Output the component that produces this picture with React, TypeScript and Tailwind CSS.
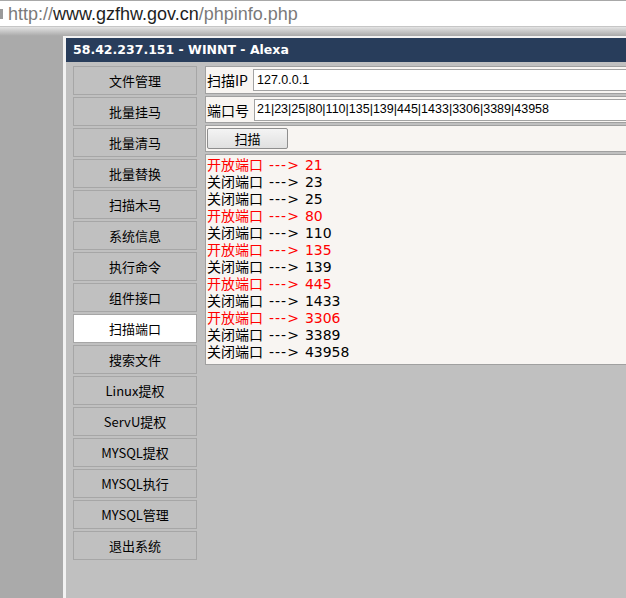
import React from 'react';

const menu = [
    '文件管理',
    '批量挂马',
    '批量清马',
    '批量替换',
    '扫描木马',
    '系统信息',
    '执行命令',
    '组件接口',
    '扫描端口',
    '搜索文件',
    'Linux提权',
    'ServU提权',
    'MYSQL提权',
    'MYSQL执行',
    'MYSQL管理',
    '退出系统',
];

const results: [boolean, string][] = [
    [true, '21'],
    [false, '23'],
    [false, '25'],
    [true, '80'],
    [false, '110'],
    [true, '135'],
    [false, '139'],
    [true, '445'],
    [false, '1433'],
    [true, '3306'],
    [false, '3389'],
    [false, '43958'],
];

export default function App() {
    return (
        <div className="h-[598px] w-[626px] overflow-hidden flex flex-col bg-[#aaaaaa]">
            {/* address bar */}
            <div className="h-[27px] shrink-0 bg-white border-t border-b border-t-[#a8a8a8] border-b-[#c6c6c6] flex items-center font-['Liberation_Sans',Arial,sans-serif] text-[18px] leading-none">
                <div className="w-[3px] h-[10px] bg-[#9a9a9a] mr-[5px]" />
                <span className="text-[#7a7a7a]">http://</span>
                <span className="text-[#1e1e1e]">www.gzfhw.gov.cn</span>
                <span className="text-[#7a7a7a]">/phpinfo.php</span>
            </div>
            <div className="h-[9px] shrink-0 bg-gradient-to-b from-[#e4e4e4] to-[#a9a9a9]" />

            <div className="flex-1 flex min-h-0">
                <div className="w-[63px] shrink-0" />
                <div className="flex-1 border-l-[3px] border-t-2 border-[#f2f2f2] bg-[#c0c0c0] overflow-hidden flex flex-col">
                    <div className="h-[24px] shrink-0 bg-[#283d5b] text-white font-bold text-[12.5px] pl-[7px] flex items-center font-['DejaVu_Sans',Verdana,sans-serif] whitespace-nowrap">
                        58.42.237.151 - WINNT - Alexa
                    </div>

                    <div className="flex pt-[4px] pl-[7px]">
                        <div className="w-[124px] shrink-0 flex flex-col gap-[2px]">
                            {menu.map((m) => (
                                <div
                                    key={m}
                                    className={
                                        'h-[29px] border border-[#a6a6a6] flex items-center justify-center text-[13px] text-black font-["Noto_Sans_CJK_SC",sans-serif] ' +
                                        (m === '扫描端口' ? 'bg-white' : 'bg-[#c0c0c0]')
                                    }
                                >
                                    {m}
                                </div>
                            ))}
                        </div>

                        <div className="ml-[8px] w-[600px] shrink-0 flex flex-col gap-[2px] text-[14px] font-['Noto_Sans_CJK_SC',sans-serif]">
                            <div className="h-[28px] border border-[#a0a0a0] bg-[#f8f5f2] flex items-center pl-[1px]">
                                <span className="w-[46px] leading-none">扫描IP</span>
                                <div className="flex-1 h-[22px] border border-[#a3a3a3] bg-white flex items-center pl-[3px] text-[12.5px] font-['Liberation_Sans',Arial,sans-serif]">
                                    127.0.0.1
                                </div>
                            </div>
                            <div className="h-[27px] border border-[#a0a0a0] bg-[#f8f5f2] flex items-center pl-[1px]">
                                <span className="w-[47px] leading-none">端口号</span>
                                <div className="flex-1 h-[22px] border border-[#a3a3a3] bg-white flex items-center pl-[2px] text-[12.5px] font-['Liberation_Sans',Arial,sans-serif] whitespace-nowrap">
                                    21|23|25|80|110|135|139|445|1433|3306|3389|43958
                                </div>
                            </div>
                            <div className="h-[27px] border border-[#a0a0a0] bg-[#f8f5f2] flex items-center pl-[1px]">
                                <button className="w-[81px] h-[21px] border border-[#8e8e8e] rounded-[2px] bg-gradient-to-b from-[#f4f4f4] to-[#e0e0e0] text-[13px] leading-none flex items-center justify-center">
                                    扫描
                                </button>
                            </div>

                            <div className="border border-[#a0a0a0] bg-[#f8f5f2] pl-[1px] pt-[2px] pb-[3px] font-['DejaVu_Sans','Noto_Sans_CJK_SC',sans-serif] text-[14px] leading-[17px]">
                                {results.map(([open, port], i) => (
                                    <div key={i} className={'flex whitespace-nowrap ' + (open ? 'text-[#ff0000]' : 'text-black')}>
                                        <span>{open ? '开放端口' : '关闭端口'}</span>
                                        <span className="ml-[6px] tracking-[1px]">---&gt;</span>
                                        <span className="ml-[5px]">{port}</span>
                                    </div>
                                ))}
                            </div>
                        </div>
                    </div>
                </div>
            </div>
        </div>
    );
}
